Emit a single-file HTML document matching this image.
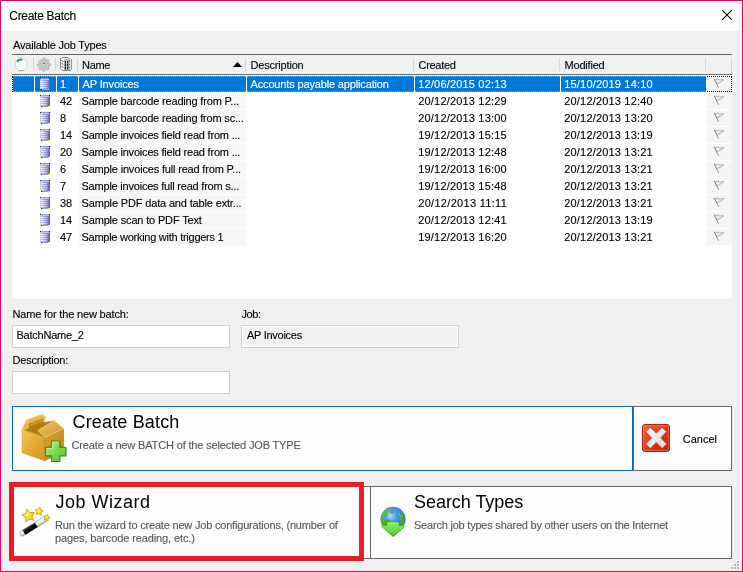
<!DOCTYPE html>
<html><head><meta charset="utf-8"><title>Create Batch</title>
<style>
html,body{margin:0;padding:0;}
body{width:743px;height:572px;overflow:hidden;background:#f0f0f0;font-family:"Liberation Sans",sans-serif;font-size:11px;color:#000;position:relative;}
div,i,b,span,svg{position:absolute;}
#win{left:0;top:0;width:741px;height:570px;border:1px solid #e6005e;background:#f0f0f0;}
#tb{left:1px;top:1px;width:741px;height:30px;background:#fff;}
.t{white-space:nowrap;line-height:20px;font-family:"Liberation Sans",sans-serif;-webkit-text-stroke:0.12px currentColor;}
#lvbg{left:12px;top:54px;width:720px;height:245px;background:#fff;}
#hd{left:12px;top:54px;width:720px;height:21px;background:#f0f0f0;border-top:1px solid #666;border-bottom:1px solid #6c6c6c;box-sizing:border-box;}
.hv{top:58px;width:1px;height:13px;background:#d6d6d6;}
.selbg{left:12px;width:694px;height:16px;background:#0078d7;}
.nmbg{left:79px;width:167px;height:16px;background:#f7f7f7;}
.flbg{height:16px;background:#f5f5f5;}
.vd{width:1px;height:16px;background:#fff;}
#focus{left:12px;top:76px;width:718px;height:14px;border:1px dotted #fff;mix-blend-mode:difference;}
.inp{box-sizing:border-box;width:218px;height:23px;border:1px solid #d0d0d0;background:#fff;}
.inp.ro{background:#f0f0f0;box-shadow:inset 0 0 0 1px #fff, inset 0 0 0 2px #f7f7f7;}
.btn{box-sizing:border-box;background:#fdfdfd;border:1px solid #686868;}
#red{left:9px;top:482px;width:345px;height:69px;border:5px solid #ed1c24;}
</style></head><body>
<div id="win"></div>
<div id="tb"></div>
<svg style="left:722px;top:10px" width="10" height="10" viewBox="0 0 10 10"><path d="M0.3 0.3 L9.7 9.7 M9.7 0.3 L0.3 9.7" stroke="#000" stroke-width="1.05" fill="none"/></svg>
<div id="lvbg"></div>
<div id="hd"></div>
<i class="hv" style="left:33px"></i><i class="hv" style="left:55px"></i><i class="hv" style="left:77px"></i><i class="hv" style="left:245px"></i><i class="hv" style="left:413px"></i><i class="hv" style="left:559px"></i><i class="hv" style="left:705px"></i><i class="hv" style="left:731px"></i>
<svg style="left:233px;top:62px" width="9" height="5" viewBox="0 0 9 5"><path d="M0 5 L4.5 0 L9 5 Z" fill="#000"/></svg>
<div class="selbg" style="top:76px"></div>
<div class="flbg" style="left:707px;top:76px;width:25px"></div>
<i class="vd" style="left:12px;top:76px"></i>
<i class="vd" style="left:34px;top:76px"></i>
<i class="vd" style="left:56px;top:76px"></i>
<i class="vd" style="left:78px;top:76px"></i>
<i class="vd" style="left:246px;top:76px"></i>
<i class="vd" style="left:414px;top:76px"></i>
<i class="vd" style="left:560px;top:76px"></i>
<i class="vd" style="left:706px;top:76px"></i>
<svg class="db" style="left:40px;top:78px" width="10" height="12" viewBox="0 0 10 12" shape-rendering="crispEdges"><linearGradient id="g0" x1="0" x2="1" y1="0" y2="0"><stop offset="0" stop-color="#d2d2f4"/><stop offset=".3" stop-color="#b4b4e4"/><stop offset=".7" stop-color="#8a8ac8"/><stop offset="1" stop-color="#5a5aa2"/></linearGradient><linearGradient id="h0" x1="0" x2="1" y1="0" y2="0"><stop offset="0" stop-color="#fff" stop-opacity=".75"/><stop offset=".6" stop-color="#fff" stop-opacity=".45"/><stop offset="1" stop-color="#fff" stop-opacity="0"/></linearGradient><rect x="0" y="0" width="10" height="12" fill="url(#g0)"/><rect x="2" y="0" width="7" height="1" fill="#9a9ad4"/><rect x="1" y="1" width="8" height="1" fill="#c4c4ee"/><rect x="1" y="3" width="8" height="1" fill="url(#h0)"/><rect x="1" y="5" width="8" height="1" fill="url(#h0)"/><rect x="1" y="7" width="8" height="1" fill="url(#h0)"/><rect x="1" y="9" width="8" height="1" fill="url(#h0)"/><rect x="0" y="0" width="1" height="1" fill="#1c1c5c"/><rect x="1" y="0" width="1" height="1" fill="#e8e020"/><rect x="9" y="0" width="1" height="1" fill="#1c1c5c"/><rect x="0" y="10" width="1" height="1" fill="#e8e020"/><rect x="0" y="11" width="1" height="1" fill="#0078d7"/><rect x="1" y="11" width="1" height="1" fill="#1c1c5c"/><rect x="2" y="11" width="6" height="1" fill="#9c9cd4"/><rect x="8" y="11" width="1" height="1" fill="#e8e020"/><rect x="9" y="11" width="1" height="1" fill="#0078d7"/><rect x="9" y="10" width="1" height="1" fill="#7a7aba"/></svg>
<svg class="fg" style="left:713px;top:78px" width="13" height="11" viewBox="0 0 13 11"><path d="M1.2 0.9 L2.6 1.7 L5 1 L6.6 1.9 L11 1.7 L7 4.4 L3.8 5.8 Z" fill="#eeeee0" stroke="#a2a2a2" stroke-width=".8" stroke-linejoin="round"/><path d="M1.2 0.9 L5.6 9.8" stroke="#8c8c8c" stroke-width="1" fill="none"/></svg>
<div class="nmbg" style="top:93px"></div>
<div class="flbg" style="left:707px;top:93px;width:25px"></div>
<svg class="db" style="left:40px;top:95px" width="10" height="12" viewBox="0 0 10 12" shape-rendering="crispEdges"><linearGradient id="g1" x1="0" x2="1" y1="0" y2="0"><stop offset="0" stop-color="#d2d2f4"/><stop offset=".3" stop-color="#b4b4e4"/><stop offset=".7" stop-color="#8a8ac8"/><stop offset="1" stop-color="#5a5aa2"/></linearGradient><linearGradient id="h1" x1="0" x2="1" y1="0" y2="0"><stop offset="0" stop-color="#fff" stop-opacity=".75"/><stop offset=".6" stop-color="#fff" stop-opacity=".45"/><stop offset="1" stop-color="#fff" stop-opacity="0"/></linearGradient><rect x="0" y="0" width="10" height="12" fill="url(#g1)"/><rect x="2" y="0" width="7" height="1" fill="#9a9ad4"/><rect x="1" y="1" width="8" height="1" fill="#c4c4ee"/><rect x="1" y="3" width="8" height="1" fill="url(#h1)"/><rect x="1" y="5" width="8" height="1" fill="url(#h1)"/><rect x="1" y="7" width="8" height="1" fill="url(#h1)"/><rect x="1" y="9" width="8" height="1" fill="url(#h1)"/><rect x="0" y="0" width="1" height="1" fill="#1c1c5c"/><rect x="1" y="0" width="1" height="1" fill="#e8e020"/><rect x="9" y="0" width="1" height="1" fill="#1c1c5c"/><rect x="0" y="10" width="1" height="1" fill="#e8e020"/><rect x="0" y="11" width="1" height="1" fill="#fff"/><rect x="1" y="11" width="1" height="1" fill="#1c1c5c"/><rect x="2" y="11" width="6" height="1" fill="#9c9cd4"/><rect x="8" y="11" width="1" height="1" fill="#e8e020"/><rect x="9" y="11" width="1" height="1" fill="#fff"/><rect x="9" y="10" width="1" height="1" fill="#7a7aba"/></svg>
<svg class="fg" style="left:713px;top:95px" width="13" height="11" viewBox="0 0 13 11"><path d="M1.2 0.9 L2.6 1.7 L5 1 L6.6 1.9 L11 1.7 L7 4.4 L3.8 5.8 Z" fill="#eeeee0" stroke="#a2a2a2" stroke-width=".8" stroke-linejoin="round"/><path d="M1.2 0.9 L5.6 9.8" stroke="#8c8c8c" stroke-width="1" fill="none"/></svg>
<div class="nmbg" style="top:110px"></div>
<div class="flbg" style="left:707px;top:110px;width:25px"></div>
<svg class="db" style="left:40px;top:112px" width="10" height="12" viewBox="0 0 10 12" shape-rendering="crispEdges"><linearGradient id="g2" x1="0" x2="1" y1="0" y2="0"><stop offset="0" stop-color="#d2d2f4"/><stop offset=".3" stop-color="#b4b4e4"/><stop offset=".7" stop-color="#8a8ac8"/><stop offset="1" stop-color="#5a5aa2"/></linearGradient><linearGradient id="h2" x1="0" x2="1" y1="0" y2="0"><stop offset="0" stop-color="#fff" stop-opacity=".75"/><stop offset=".6" stop-color="#fff" stop-opacity=".45"/><stop offset="1" stop-color="#fff" stop-opacity="0"/></linearGradient><rect x="0" y="0" width="10" height="12" fill="url(#g2)"/><rect x="2" y="0" width="7" height="1" fill="#9a9ad4"/><rect x="1" y="1" width="8" height="1" fill="#c4c4ee"/><rect x="1" y="3" width="8" height="1" fill="url(#h2)"/><rect x="1" y="5" width="8" height="1" fill="url(#h2)"/><rect x="1" y="7" width="8" height="1" fill="url(#h2)"/><rect x="1" y="9" width="8" height="1" fill="url(#h2)"/><rect x="0" y="0" width="1" height="1" fill="#1c1c5c"/><rect x="1" y="0" width="1" height="1" fill="#e8e020"/><rect x="9" y="0" width="1" height="1" fill="#1c1c5c"/><rect x="0" y="10" width="1" height="1" fill="#e8e020"/><rect x="0" y="11" width="1" height="1" fill="#fff"/><rect x="1" y="11" width="1" height="1" fill="#1c1c5c"/><rect x="2" y="11" width="6" height="1" fill="#9c9cd4"/><rect x="8" y="11" width="1" height="1" fill="#e8e020"/><rect x="9" y="11" width="1" height="1" fill="#fff"/><rect x="9" y="10" width="1" height="1" fill="#7a7aba"/></svg>
<svg class="fg" style="left:713px;top:112px" width="13" height="11" viewBox="0 0 13 11"><path d="M1.2 0.9 L2.6 1.7 L5 1 L6.6 1.9 L11 1.7 L7 4.4 L3.8 5.8 Z" fill="#eeeee0" stroke="#a2a2a2" stroke-width=".8" stroke-linejoin="round"/><path d="M1.2 0.9 L5.6 9.8" stroke="#8c8c8c" stroke-width="1" fill="none"/></svg>
<div class="nmbg" style="top:127px"></div>
<div class="flbg" style="left:707px;top:127px;width:25px"></div>
<svg class="db" style="left:40px;top:129px" width="10" height="12" viewBox="0 0 10 12" shape-rendering="crispEdges"><linearGradient id="g3" x1="0" x2="1" y1="0" y2="0"><stop offset="0" stop-color="#d2d2f4"/><stop offset=".3" stop-color="#b4b4e4"/><stop offset=".7" stop-color="#8a8ac8"/><stop offset="1" stop-color="#5a5aa2"/></linearGradient><linearGradient id="h3" x1="0" x2="1" y1="0" y2="0"><stop offset="0" stop-color="#fff" stop-opacity=".75"/><stop offset=".6" stop-color="#fff" stop-opacity=".45"/><stop offset="1" stop-color="#fff" stop-opacity="0"/></linearGradient><rect x="0" y="0" width="10" height="12" fill="url(#g3)"/><rect x="2" y="0" width="7" height="1" fill="#9a9ad4"/><rect x="1" y="1" width="8" height="1" fill="#c4c4ee"/><rect x="1" y="3" width="8" height="1" fill="url(#h3)"/><rect x="1" y="5" width="8" height="1" fill="url(#h3)"/><rect x="1" y="7" width="8" height="1" fill="url(#h3)"/><rect x="1" y="9" width="8" height="1" fill="url(#h3)"/><rect x="0" y="0" width="1" height="1" fill="#1c1c5c"/><rect x="1" y="0" width="1" height="1" fill="#e8e020"/><rect x="9" y="0" width="1" height="1" fill="#1c1c5c"/><rect x="0" y="10" width="1" height="1" fill="#e8e020"/><rect x="0" y="11" width="1" height="1" fill="#fff"/><rect x="1" y="11" width="1" height="1" fill="#1c1c5c"/><rect x="2" y="11" width="6" height="1" fill="#9c9cd4"/><rect x="8" y="11" width="1" height="1" fill="#e8e020"/><rect x="9" y="11" width="1" height="1" fill="#fff"/><rect x="9" y="10" width="1" height="1" fill="#7a7aba"/></svg>
<svg class="fg" style="left:713px;top:129px" width="13" height="11" viewBox="0 0 13 11"><path d="M1.2 0.9 L2.6 1.7 L5 1 L6.6 1.9 L11 1.7 L7 4.4 L3.8 5.8 Z" fill="#eeeee0" stroke="#a2a2a2" stroke-width=".8" stroke-linejoin="round"/><path d="M1.2 0.9 L5.6 9.8" stroke="#8c8c8c" stroke-width="1" fill="none"/></svg>
<div class="nmbg" style="top:144px"></div>
<div class="flbg" style="left:707px;top:144px;width:25px"></div>
<svg class="db" style="left:40px;top:146px" width="10" height="12" viewBox="0 0 10 12" shape-rendering="crispEdges"><linearGradient id="g4" x1="0" x2="1" y1="0" y2="0"><stop offset="0" stop-color="#d2d2f4"/><stop offset=".3" stop-color="#b4b4e4"/><stop offset=".7" stop-color="#8a8ac8"/><stop offset="1" stop-color="#5a5aa2"/></linearGradient><linearGradient id="h4" x1="0" x2="1" y1="0" y2="0"><stop offset="0" stop-color="#fff" stop-opacity=".75"/><stop offset=".6" stop-color="#fff" stop-opacity=".45"/><stop offset="1" stop-color="#fff" stop-opacity="0"/></linearGradient><rect x="0" y="0" width="10" height="12" fill="url(#g4)"/><rect x="2" y="0" width="7" height="1" fill="#9a9ad4"/><rect x="1" y="1" width="8" height="1" fill="#c4c4ee"/><rect x="1" y="3" width="8" height="1" fill="url(#h4)"/><rect x="1" y="5" width="8" height="1" fill="url(#h4)"/><rect x="1" y="7" width="8" height="1" fill="url(#h4)"/><rect x="1" y="9" width="8" height="1" fill="url(#h4)"/><rect x="0" y="0" width="1" height="1" fill="#1c1c5c"/><rect x="1" y="0" width="1" height="1" fill="#e8e020"/><rect x="9" y="0" width="1" height="1" fill="#1c1c5c"/><rect x="0" y="10" width="1" height="1" fill="#e8e020"/><rect x="0" y="11" width="1" height="1" fill="#fff"/><rect x="1" y="11" width="1" height="1" fill="#1c1c5c"/><rect x="2" y="11" width="6" height="1" fill="#9c9cd4"/><rect x="8" y="11" width="1" height="1" fill="#e8e020"/><rect x="9" y="11" width="1" height="1" fill="#fff"/><rect x="9" y="10" width="1" height="1" fill="#7a7aba"/></svg>
<svg class="fg" style="left:713px;top:146px" width="13" height="11" viewBox="0 0 13 11"><path d="M1.2 0.9 L2.6 1.7 L5 1 L6.6 1.9 L11 1.7 L7 4.4 L3.8 5.8 Z" fill="#eeeee0" stroke="#a2a2a2" stroke-width=".8" stroke-linejoin="round"/><path d="M1.2 0.9 L5.6 9.8" stroke="#8c8c8c" stroke-width="1" fill="none"/></svg>
<div class="nmbg" style="top:161px"></div>
<div class="flbg" style="left:707px;top:161px;width:25px"></div>
<svg class="db" style="left:40px;top:163px" width="10" height="12" viewBox="0 0 10 12" shape-rendering="crispEdges"><linearGradient id="g5" x1="0" x2="1" y1="0" y2="0"><stop offset="0" stop-color="#d2d2f4"/><stop offset=".3" stop-color="#b4b4e4"/><stop offset=".7" stop-color="#8a8ac8"/><stop offset="1" stop-color="#5a5aa2"/></linearGradient><linearGradient id="h5" x1="0" x2="1" y1="0" y2="0"><stop offset="0" stop-color="#fff" stop-opacity=".75"/><stop offset=".6" stop-color="#fff" stop-opacity=".45"/><stop offset="1" stop-color="#fff" stop-opacity="0"/></linearGradient><rect x="0" y="0" width="10" height="12" fill="url(#g5)"/><rect x="2" y="0" width="7" height="1" fill="#9a9ad4"/><rect x="1" y="1" width="8" height="1" fill="#c4c4ee"/><rect x="1" y="3" width="8" height="1" fill="url(#h5)"/><rect x="1" y="5" width="8" height="1" fill="url(#h5)"/><rect x="1" y="7" width="8" height="1" fill="url(#h5)"/><rect x="1" y="9" width="8" height="1" fill="url(#h5)"/><rect x="0" y="0" width="1" height="1" fill="#1c1c5c"/><rect x="1" y="0" width="1" height="1" fill="#e8e020"/><rect x="9" y="0" width="1" height="1" fill="#1c1c5c"/><rect x="0" y="10" width="1" height="1" fill="#e8e020"/><rect x="0" y="11" width="1" height="1" fill="#fff"/><rect x="1" y="11" width="1" height="1" fill="#1c1c5c"/><rect x="2" y="11" width="6" height="1" fill="#9c9cd4"/><rect x="8" y="11" width="1" height="1" fill="#e8e020"/><rect x="9" y="11" width="1" height="1" fill="#fff"/><rect x="9" y="10" width="1" height="1" fill="#7a7aba"/></svg>
<svg class="fg" style="left:713px;top:163px" width="13" height="11" viewBox="0 0 13 11"><path d="M1.2 0.9 L2.6 1.7 L5 1 L6.6 1.9 L11 1.7 L7 4.4 L3.8 5.8 Z" fill="#eeeee0" stroke="#a2a2a2" stroke-width=".8" stroke-linejoin="round"/><path d="M1.2 0.9 L5.6 9.8" stroke="#8c8c8c" stroke-width="1" fill="none"/></svg>
<div class="nmbg" style="top:178px"></div>
<div class="flbg" style="left:707px;top:178px;width:25px"></div>
<svg class="db" style="left:40px;top:180px" width="10" height="12" viewBox="0 0 10 12" shape-rendering="crispEdges"><linearGradient id="g6" x1="0" x2="1" y1="0" y2="0"><stop offset="0" stop-color="#d2d2f4"/><stop offset=".3" stop-color="#b4b4e4"/><stop offset=".7" stop-color="#8a8ac8"/><stop offset="1" stop-color="#5a5aa2"/></linearGradient><linearGradient id="h6" x1="0" x2="1" y1="0" y2="0"><stop offset="0" stop-color="#fff" stop-opacity=".75"/><stop offset=".6" stop-color="#fff" stop-opacity=".45"/><stop offset="1" stop-color="#fff" stop-opacity="0"/></linearGradient><rect x="0" y="0" width="10" height="12" fill="url(#g6)"/><rect x="2" y="0" width="7" height="1" fill="#9a9ad4"/><rect x="1" y="1" width="8" height="1" fill="#c4c4ee"/><rect x="1" y="3" width="8" height="1" fill="url(#h6)"/><rect x="1" y="5" width="8" height="1" fill="url(#h6)"/><rect x="1" y="7" width="8" height="1" fill="url(#h6)"/><rect x="1" y="9" width="8" height="1" fill="url(#h6)"/><rect x="0" y="0" width="1" height="1" fill="#1c1c5c"/><rect x="1" y="0" width="1" height="1" fill="#e8e020"/><rect x="9" y="0" width="1" height="1" fill="#1c1c5c"/><rect x="0" y="10" width="1" height="1" fill="#e8e020"/><rect x="0" y="11" width="1" height="1" fill="#fff"/><rect x="1" y="11" width="1" height="1" fill="#1c1c5c"/><rect x="2" y="11" width="6" height="1" fill="#9c9cd4"/><rect x="8" y="11" width="1" height="1" fill="#e8e020"/><rect x="9" y="11" width="1" height="1" fill="#fff"/><rect x="9" y="10" width="1" height="1" fill="#7a7aba"/></svg>
<svg class="fg" style="left:713px;top:180px" width="13" height="11" viewBox="0 0 13 11"><path d="M1.2 0.9 L2.6 1.7 L5 1 L6.6 1.9 L11 1.7 L7 4.4 L3.8 5.8 Z" fill="#eeeee0" stroke="#a2a2a2" stroke-width=".8" stroke-linejoin="round"/><path d="M1.2 0.9 L5.6 9.8" stroke="#8c8c8c" stroke-width="1" fill="none"/></svg>
<div class="nmbg" style="top:195px"></div>
<div class="flbg" style="left:707px;top:195px;width:25px"></div>
<svg class="db" style="left:40px;top:197px" width="10" height="12" viewBox="0 0 10 12" shape-rendering="crispEdges"><linearGradient id="g7" x1="0" x2="1" y1="0" y2="0"><stop offset="0" stop-color="#d2d2f4"/><stop offset=".3" stop-color="#b4b4e4"/><stop offset=".7" stop-color="#8a8ac8"/><stop offset="1" stop-color="#5a5aa2"/></linearGradient><linearGradient id="h7" x1="0" x2="1" y1="0" y2="0"><stop offset="0" stop-color="#fff" stop-opacity=".75"/><stop offset=".6" stop-color="#fff" stop-opacity=".45"/><stop offset="1" stop-color="#fff" stop-opacity="0"/></linearGradient><rect x="0" y="0" width="10" height="12" fill="url(#g7)"/><rect x="2" y="0" width="7" height="1" fill="#9a9ad4"/><rect x="1" y="1" width="8" height="1" fill="#c4c4ee"/><rect x="1" y="3" width="8" height="1" fill="url(#h7)"/><rect x="1" y="5" width="8" height="1" fill="url(#h7)"/><rect x="1" y="7" width="8" height="1" fill="url(#h7)"/><rect x="1" y="9" width="8" height="1" fill="url(#h7)"/><rect x="0" y="0" width="1" height="1" fill="#1c1c5c"/><rect x="1" y="0" width="1" height="1" fill="#e8e020"/><rect x="9" y="0" width="1" height="1" fill="#1c1c5c"/><rect x="0" y="10" width="1" height="1" fill="#e8e020"/><rect x="0" y="11" width="1" height="1" fill="#fff"/><rect x="1" y="11" width="1" height="1" fill="#1c1c5c"/><rect x="2" y="11" width="6" height="1" fill="#9c9cd4"/><rect x="8" y="11" width="1" height="1" fill="#e8e020"/><rect x="9" y="11" width="1" height="1" fill="#fff"/><rect x="9" y="10" width="1" height="1" fill="#7a7aba"/></svg>
<svg class="fg" style="left:713px;top:197px" width="13" height="11" viewBox="0 0 13 11"><path d="M1.2 0.9 L2.6 1.7 L5 1 L6.6 1.9 L11 1.7 L7 4.4 L3.8 5.8 Z" fill="#eeeee0" stroke="#a2a2a2" stroke-width=".8" stroke-linejoin="round"/><path d="M1.2 0.9 L5.6 9.8" stroke="#8c8c8c" stroke-width="1" fill="none"/></svg>
<div class="nmbg" style="top:212px"></div>
<div class="flbg" style="left:707px;top:212px;width:25px"></div>
<svg class="db" style="left:40px;top:214px" width="10" height="12" viewBox="0 0 10 12" shape-rendering="crispEdges"><linearGradient id="g8" x1="0" x2="1" y1="0" y2="0"><stop offset="0" stop-color="#d2d2f4"/><stop offset=".3" stop-color="#b4b4e4"/><stop offset=".7" stop-color="#8a8ac8"/><stop offset="1" stop-color="#5a5aa2"/></linearGradient><linearGradient id="h8" x1="0" x2="1" y1="0" y2="0"><stop offset="0" stop-color="#fff" stop-opacity=".75"/><stop offset=".6" stop-color="#fff" stop-opacity=".45"/><stop offset="1" stop-color="#fff" stop-opacity="0"/></linearGradient><rect x="0" y="0" width="10" height="12" fill="url(#g8)"/><rect x="2" y="0" width="7" height="1" fill="#9a9ad4"/><rect x="1" y="1" width="8" height="1" fill="#c4c4ee"/><rect x="1" y="3" width="8" height="1" fill="url(#h8)"/><rect x="1" y="5" width="8" height="1" fill="url(#h8)"/><rect x="1" y="7" width="8" height="1" fill="url(#h8)"/><rect x="1" y="9" width="8" height="1" fill="url(#h8)"/><rect x="0" y="0" width="1" height="1" fill="#1c1c5c"/><rect x="1" y="0" width="1" height="1" fill="#e8e020"/><rect x="9" y="0" width="1" height="1" fill="#1c1c5c"/><rect x="0" y="10" width="1" height="1" fill="#e8e020"/><rect x="0" y="11" width="1" height="1" fill="#fff"/><rect x="1" y="11" width="1" height="1" fill="#1c1c5c"/><rect x="2" y="11" width="6" height="1" fill="#9c9cd4"/><rect x="8" y="11" width="1" height="1" fill="#e8e020"/><rect x="9" y="11" width="1" height="1" fill="#fff"/><rect x="9" y="10" width="1" height="1" fill="#7a7aba"/></svg>
<svg class="fg" style="left:713px;top:214px" width="13" height="11" viewBox="0 0 13 11"><path d="M1.2 0.9 L2.6 1.7 L5 1 L6.6 1.9 L11 1.7 L7 4.4 L3.8 5.8 Z" fill="#eeeee0" stroke="#a2a2a2" stroke-width=".8" stroke-linejoin="round"/><path d="M1.2 0.9 L5.6 9.8" stroke="#8c8c8c" stroke-width="1" fill="none"/></svg>
<div class="nmbg" style="top:229px"></div>
<div class="flbg" style="left:707px;top:229px;width:25px"></div>
<svg class="db" style="left:40px;top:231px" width="10" height="12" viewBox="0 0 10 12" shape-rendering="crispEdges"><linearGradient id="g9" x1="0" x2="1" y1="0" y2="0"><stop offset="0" stop-color="#d2d2f4"/><stop offset=".3" stop-color="#b4b4e4"/><stop offset=".7" stop-color="#8a8ac8"/><stop offset="1" stop-color="#5a5aa2"/></linearGradient><linearGradient id="h9" x1="0" x2="1" y1="0" y2="0"><stop offset="0" stop-color="#fff" stop-opacity=".75"/><stop offset=".6" stop-color="#fff" stop-opacity=".45"/><stop offset="1" stop-color="#fff" stop-opacity="0"/></linearGradient><rect x="0" y="0" width="10" height="12" fill="url(#g9)"/><rect x="2" y="0" width="7" height="1" fill="#9a9ad4"/><rect x="1" y="1" width="8" height="1" fill="#c4c4ee"/><rect x="1" y="3" width="8" height="1" fill="url(#h9)"/><rect x="1" y="5" width="8" height="1" fill="url(#h9)"/><rect x="1" y="7" width="8" height="1" fill="url(#h9)"/><rect x="1" y="9" width="8" height="1" fill="url(#h9)"/><rect x="0" y="0" width="1" height="1" fill="#1c1c5c"/><rect x="1" y="0" width="1" height="1" fill="#e8e020"/><rect x="9" y="0" width="1" height="1" fill="#1c1c5c"/><rect x="0" y="10" width="1" height="1" fill="#e8e020"/><rect x="0" y="11" width="1" height="1" fill="#fff"/><rect x="1" y="11" width="1" height="1" fill="#1c1c5c"/><rect x="2" y="11" width="6" height="1" fill="#9c9cd4"/><rect x="8" y="11" width="1" height="1" fill="#e8e020"/><rect x="9" y="11" width="1" height="1" fill="#fff"/><rect x="9" y="10" width="1" height="1" fill="#7a7aba"/></svg>
<svg class="fg" style="left:713px;top:231px" width="13" height="11" viewBox="0 0 13 11"><path d="M1.2 0.9 L2.6 1.7 L5 1 L6.6 1.9 L11 1.7 L7 4.4 L3.8 5.8 Z" fill="#eeeee0" stroke="#a2a2a2" stroke-width=".8" stroke-linejoin="round"/><path d="M1.2 0.9 L5.6 9.8" stroke="#8c8c8c" stroke-width="1" fill="none"/></svg>
<div class="inp" style="left:12px;top:325px"></div>
<div class="inp ro" style="left:241px;top:325px"></div>
<div class="inp" style="left:12px;top:371px"></div>
<div class="btn" style="left:12px;top:406px;width:621px;height:65px;border-color:#0d66c8;"></div>
<div class="btn" style="left:633px;top:406px;width:99px;height:65px;"></div>
<div class="btn" style="left:12px;top:486px;width:359px;height:73px;"></div>
<div class="btn" style="left:370px;top:486px;width:362px;height:73px;"></div>

<!-- header icons -->
<svg style="left:14px;top:56px" width="14" height="16" viewBox="0 0 14 16">
<rect x="5.5" y="1.2" width="3" height="1.4" fill="#cfcfcf"/>
<path d="M4.2 2.8 H9.8 L12.8 5.6 V11.4 L9.8 14.6 H4.2 L1.3 11.6 V5.6 Z" fill="#fff" stroke="#cdcdcd" stroke-width="0.9"/>
<path d="M4.6 14.6 H9.4" stroke="#8f8f8f" stroke-width="0.9"/>
<path d="M3.4 5.3 Q4.6 3.6 7.8 3.5" stroke="#00868a" stroke-width="1.5" fill="none" stroke-linecap="round"/>
<rect x="4.6" y="6.3" width="1.6" height="0.9" fill="#dadada"/>
</svg>
<svg style="left:36px;top:56px" width="16" height="16" viewBox="0 0 16 16">
<path d="M6.6 1.2 h2.8 l.5 2 l1.2 .6 l1.8 -1 l1.7 1.9 l-1.1 1.7 l.4 1.2 l2 .5 v2.3 l-2 .5 l-.5 1.2 l1 1.8 l-1.8 1.7 l-1.7 -1 l-1.2 .5 l-.5 1.9 h-2.6 l-.5 -1.9 l-1.2 -.5 l-1.8 1 l-1.7 -1.8 l1 -1.7 l-.5 -1.2 l-1.9 -.5 v-2.4 l1.9 -.5 l.5 -1.2 l-1 -1.7 l1.8 -1.8 l1.7 1 l1.2 -.6 z" fill="#c2c2c2" stroke="#a9a9a9" stroke-width=".7" transform="translate(1.2,.9) scale(.84)"/>
<path d="M3 4.5 L4.6 3 M5.8 2.4 L6.6 1.6 M1.6 7.6 L2.4 6.6" stroke="#fff" stroke-width="1" opacity=".9"/>
<circle cx="7.8" cy="7.4" r="1.6" fill="#d6d6d6"/>
<rect x="7" y="6.9" width="2.1" height="1.1" fill="#0a8a8c"/>
</svg>
<svg style="left:59px;top:56px" width="14" height="16" viewBox="0 0 14 16" shape-rendering="crispEdges">
<rect x="2" y="2" width="10" height="12" fill="#f4f4f4"/>
<rect x="3" y="1" width="6" height="1" fill="#8c8c8c"/><rect x="2" y="2" width="1" height="1" fill="#9a9a9a"/><rect x="9" y="2" width="2" height="1" fill="#b0b0b0"/>
<rect x="1" y="2" width="1" height="11" fill="#8a8a8a"/><rect x="12" y="3" width="1" height="11" fill="#9a9a9a"/>
<rect x="3" y="14" width="9" height="1" fill="#8c8c8c"/><rect x="2" y="13" width="1" height="1" fill="#9a9a9a"/>
<rect x="2" y="4" width="2" height="1" fill="#a4a4a4"/><rect x="3" y="5" width="2" height="1" fill="#b4b4b4"/>
<rect x="2" y="7" width="2" height="1" fill="#a4a4a4"/><rect x="3" y="8" width="2" height="1" fill="#b4b4b4"/>
<rect x="2" y="10" width="2" height="1" fill="#a4a4a4"/><rect x="3" y="11" width="2" height="1" fill="#b4b4b4"/>
<rect x="5" y="3" width="7" height="11" fill="#c6c6c6"/>
<rect x="5" y="3" width="1" height="11" fill="#a6a6a6"/><rect x="7" y="4" width="1" height="10" fill="#dcdcdc"/><rect x="9" y="4" width="1" height="10" fill="#b2a8a8"/><rect x="11" y="3" width="1" height="11" fill="#e6e6e6"/>
<g fill="#0a0a92"><rect x="6" y="5" width="1" height="2"/><rect x="8" y="5" width="1" height="2"/><rect x="6" y="8" width="1" height="2"/><rect x="8" y="8" width="1" height="2"/><rect x="6" y="11" width="1" height="2"/><rect x="8" y="11" width="1" height="2"/></g>
<g fill="#0d8f8f"><rect x="6" y="7" width="1" height="1"/><rect x="8" y="7" width="1" height="1"/><rect x="6" y="10" width="1" height="1"/><rect x="8" y="10" width="1" height="1"/><rect x="6" y="13" width="1" height="1"/><rect x="8" y="13" width="1" height="1"/><rect x="10" y="4" width="1" height="2"/><rect x="10" y="8" width="1" height="1"/><rect x="10" y="11" width="1" height="1"/></g>
</svg>
<!-- box icon -->
<svg style="left:18px;top:408px" width="52" height="56" viewBox="0 0 520 560">
<defs>
<linearGradient id="bxl" x1="0" y1="0" x2="1" y2="1"><stop offset="0" stop-color="#f5c85a"/><stop offset=".5" stop-color="#e4aa34"/><stop offset="1" stop-color="#d09424"/></linearGradient>
<linearGradient id="bxr" x1="0" y1="0" x2="1" y2="1"><stop offset="0" stop-color="#d9a22e"/><stop offset="1" stop-color="#b9821a"/></linearGradient>
<linearGradient id="bxf" x1="0" y1="0" x2="1" y2="1"><stop offset="0" stop-color="#eec058"/><stop offset="1" stop-color="#cf9a2c"/></linearGradient>
<linearGradient id="pl" x1="0" y1="0" x2="1" y2="1"><stop offset="0" stop-color="#b5f08a"/><stop offset=".5" stop-color="#7ddb4e"/><stop offset="1" stop-color="#4fbe2c"/></linearGradient>
</defs>
<path d="M42 215 L85 120 L240 65 L275 88 L258 140 L360 127 L455 206 L265 297 Z" fill="#b5821a"/>
<path d="M85 120 L240 65 L275 88 L258 140 L105 195 Z" fill="#e9b84a" stroke="#f4d27a" stroke-width="10" stroke-linejoin="round"/>
<path d="M108 155 L252 103 L256 165 L205 232 L75 212 Z" fill="#b07f14"/>
<path d="M108 155 L252 103 L254 135 L100 190 Z" fill="#c8921e"/>
<path d="M42 215 L265 297 L265 527 L42 447 Z" fill="url(#bxl)" stroke="#d9a535" stroke-width="8" stroke-linejoin="round"/>
<path d="M265 297 L455 210 L455 440 L265 527 Z" fill="url(#bxr)" stroke="#c08a20" stroke-width="8" stroke-linejoin="round"/>
<path d="M200 226 L360 127 L455 206 L270 292 Z" fill="url(#bxf)" stroke="#f2cf78" stroke-width="9" stroke-linejoin="round"/>
<path d="M42 215 L85 120 L105 195 L75 212 Z" fill="#e8b646" stroke="#f2cf78" stroke-width="8" stroke-linejoin="round"/>
<path d="M335 330 H418 V393 H478 V478 H418 V535 H335 V478 H275 V393 H335 Z" fill="#000" opacity=".18" transform="translate(8,8)"/>
<path d="M335 330 H418 V393 H478 V478 H418 V535 H335 V478 H275 V393 H335 Z" fill="url(#pl)" stroke="#2f9a1c" stroke-width="12" stroke-linejoin="round"/>
<path d="M346 342 H407 M346 342 V404 H288" fill="none" stroke="#d8f8c0" stroke-width="8" opacity=".8"/>
</svg>
<!-- cancel icon -->
<svg style="left:642px;top:424px" width="28" height="28" viewBox="0 0 28 28">
<defs><linearGradient id="cr" x1="0" y1="0" x2="1" y2="1"><stop offset="0" stop-color="#f4693a"/><stop offset=".5" stop-color="#e23a1a"/><stop offset="1" stop-color="#bb1d0c"/></linearGradient>
<linearGradient id="cx" x1="0" y1="0" x2="1" y2="1"><stop offset="0" stop-color="#fff"/><stop offset="1" stop-color="#d6d6d6"/></linearGradient></defs>
<rect x=".5" y=".5" width="27" height="27" rx="2.5" fill="url(#cr)" stroke="#b51c0a" stroke-width="1"/>
<rect x="1.5" y="1.5" width="25" height="25" rx="2" fill="none" stroke="#ff8a5a" stroke-width="1" opacity=".55"/>
<path d="M8.4 3.2 L14.2 9 L20 3.2 L24.6 7.8 L18.8 13.9 L24.8 19.9 L20.2 24.6 L14.2 18.6 L8.3 24.6 L3.6 19.9 L9.6 13.9 L3.8 7.8 Z" fill="url(#cx)" stroke="#c9300f" stroke-width=".8"/>
</svg>
<!-- wand icon -->
<svg style="left:14px;top:498px" width="44" height="48" viewBox="0 0 524 572">
<defs><linearGradient id="wd" x1="0" y1="0" x2="0" y2="1"><stop offset="0" stop-color="#777"/><stop offset=".3" stop-color="#111"/><stop offset="1" stop-color="#000"/></linearGradient>
<linearGradient id="ww" x1="0" y1="0" x2="0" y2="1"><stop offset="0" stop-color="#fff"/><stop offset=".6" stop-color="#e6e6e6"/><stop offset="1" stop-color="#a8a8a8"/></linearGradient>
<radialGradient id="st" cx=".4" cy=".4" r=".7"><stop offset="0" stop-color="#fff27a"/><stop offset=".6" stop-color="#f7d81c"/><stop offset="1" stop-color="#e0b000"/></radialGradient></defs>
<g transform="translate(230,340) rotate(-32)">
<rect x="-185" y="-31" width="375" height="62" rx="28" fill="url(#ww)" stroke="#8f8f8f" stroke-width="7"/>
<rect x="-132" y="-33" width="172" height="66" fill="url(#wd)"/>
</g>
<path d="M0 -80 L25 -34 L76 -25 L40 13 L47 65 L0 42 L-47 65 L-40 13 L-76 -25 L-25 -34 Z" transform="translate(172,212) rotate(-12)" fill="url(#st)" stroke="#c89a00" stroke-width="9" stroke-linejoin="round"/>
<path d="M0 -80 L25 -34 L76 -25 L40 13 L47 65 L0 42 L-47 65 L-40 13 L-76 -25 L-25 -34 Z" transform="translate(300,160) rotate(8) scale(.66)" fill="url(#st)" stroke="#c89a00" stroke-width="12" stroke-linejoin="round"/>
<path d="M0 -80 L25 -34 L76 -25 L40 13 L47 65 L0 42 L-47 65 L-40 13 L-76 -25 L-25 -34 Z" transform="translate(390,235) rotate(15) scale(.52)" fill="url(#st)" stroke="#c89a00" stroke-width="14" stroke-linejoin="round"/>
</svg>
<!-- globe icon -->
<svg style="left:374px;top:500px" width="40" height="44" viewBox="0 0 520 572">
<defs><radialGradient id="gl" cx=".4" cy=".36" r=".7"><stop offset="0" stop-color="#b4dcff"/><stop offset=".35" stop-color="#4a9af0"/><stop offset="1" stop-color="#1a5fd0"/></radialGradient>
<linearGradient id="ga" x1="0" y1="0" x2="0" y2="1"><stop offset="0" stop-color="#8cf060"/><stop offset="1" stop-color="#56d030"/></linearGradient>
<linearGradient id="gg" x1="0" y1="0" x2="1" y2="1"><stop offset="0" stop-color="#6cd040"/><stop offset="1" stop-color="#2f9a18"/></linearGradient>
<clipPath id="gc"><circle cx="247" cy="250" r="160"/></clipPath></defs>
<circle cx="247" cy="250" r="162" fill="url(#gl)"/>
<g clip-path="url(#gc)" fill="url(#gg)">
<path d="M80 200 Q110 150 170 120 L190 140 L160 175 L180 200 L155 222 L138 200 L118 228 L135 260 L185 250 L215 285 L200 330 L150 345 L100 320 L80 270 Z"/>
<path d="M200 130 L240 120 L250 150 L235 185 L215 160 Z"/>
<path d="M312 178 L332 165 L346 200 L372 186 L384 214 L366 232 L392 250 L398 300 L384 340 L350 330 L336 296 L356 268 L330 236 L338 208 Z"/><path d="M356 150 L372 158 L380 178 L366 172 Z"/>
</g>
<path d="M170 292 H322 V338 H412 L250 482 L88 338 H170 Z" fill="#3aa81e"/>
<path d="M170 288 H322 V334 H410 L250 462 L90 334 H170 Z" fill="url(#ga)"/>
</svg>
<span class="t" id="tt" style="left:9.25px;top:6px;font-size:12px;color:#000;letter-spacing:-0.286px;">Create Batch</span>
<span class="t" id="l1" style="left:13.00px;top:35px;font-size:11px;color:#000;letter-spacing:-0.200px;">Available Job Types</span>
<span class="t" id="h1" style="left:82.00px;top:55px;font-size:11px;color:#000;letter-spacing:-0.300px;">Name</span>
<span class="t" id="h2" style="left:250.50px;top:55px;font-size:11px;color:#000;letter-spacing:-0.180px;">Description</span>
<span class="t" id="h3" style="left:418.50px;top:55px;font-size:11px;color:#000;letter-spacing:-0.300px;">Created</span>
<span class="t" id="h4" style="left:564.50px;top:55px;font-size:11px;color:#000;letter-spacing:-0.194px;">Modified</span>
<span class="t" id="n0" style="left:60.00px;top:74px;font-size:11px;color:#fff;">1</span>
<span class="t" id="m0" style="left:82.50px;top:74px;font-size:11px;color:#fff;letter-spacing:-0.135px;">AP Invoices</span>
<span class="t" id="d0" style="left:250.50px;top:74px;font-size:11px;color:#fff;letter-spacing:-0.150px;">Accounts payable application</span>
<span class="t" id="c0" style="left:418.25px;top:74px;font-size:11px;color:#fff;letter-spacing:0.180px;">12/06/2015 02:13</span>
<span class="t" id="o0" style="left:564.25px;top:74px;font-size:11px;color:#fff;letter-spacing:0.180px;">15/10/2019 14:10</span>
<span class="t" id="n1" style="left:60.00px;top:91px;font-size:11px;color:#000;">42</span>
<span class="t" id="m1" style="left:81.50px;top:91px;font-size:11px;color:#000;letter-spacing:-0.176px;">Sample barcode reading from P...</span>
<span class="t" id="c1" style="left:418.25px;top:91px;font-size:11px;color:#000;letter-spacing:0.180px;">20/12/2013 12:29</span>
<span class="t" id="o1" style="left:564.25px;top:91px;font-size:11px;color:#000;letter-spacing:0.180px;">20/12/2013 12:40</span>
<span class="t" id="n2" style="left:60.00px;top:108px;font-size:11px;color:#000;">8</span>
<span class="t" id="m2" style="left:81.50px;top:108px;font-size:11px;color:#000;letter-spacing:-0.183px;">Sample barcode reading from sc...</span>
<span class="t" id="c2" style="left:418.25px;top:108px;font-size:11px;color:#000;letter-spacing:0.180px;">20/12/2013 13:00</span>
<span class="t" id="o2" style="left:564.25px;top:108px;font-size:11px;color:#000;letter-spacing:0.180px;">20/12/2013 13:20</span>
<span class="t" id="n3" style="left:60.00px;top:125px;font-size:11px;color:#000;">14</span>
<span class="t" id="m3" style="left:81.50px;top:125px;font-size:11px;color:#000;letter-spacing:-0.199px;">Sample invoices field read from ...</span>
<span class="t" id="c3" style="left:418.25px;top:125px;font-size:11px;color:#000;letter-spacing:0.180px;">19/12/2013 15:15</span>
<span class="t" id="o3" style="left:564.25px;top:125px;font-size:11px;color:#000;letter-spacing:0.180px;">20/12/2013 13:19</span>
<span class="t" id="n4" style="left:60.00px;top:142px;font-size:11px;color:#000;">20</span>
<span class="t" id="m4" style="left:81.50px;top:142px;font-size:11px;color:#000;letter-spacing:-0.199px;">Sample invoices field read from ...</span>
<span class="t" id="c4" style="left:418.25px;top:142px;font-size:11px;color:#000;letter-spacing:0.180px;">19/12/2013 12:48</span>
<span class="t" id="o4" style="left:564.25px;top:142px;font-size:11px;color:#000;letter-spacing:0.180px;">20/12/2013 13:21</span>
<span class="t" id="n5" style="left:60.00px;top:159px;font-size:11px;color:#000;">6</span>
<span class="t" id="m5" style="left:81.50px;top:159px;font-size:11px;color:#000;letter-spacing:-0.172px;">Sample invoices full read from P...</span>
<span class="t" id="c5" style="left:418.25px;top:159px;font-size:11px;color:#000;letter-spacing:0.180px;">19/12/2013 16:00</span>
<span class="t" id="o5" style="left:564.25px;top:159px;font-size:11px;color:#000;letter-spacing:0.180px;">20/12/2013 13:21</span>
<span class="t" id="n6" style="left:60.00px;top:176px;font-size:11px;color:#000;">7</span>
<span class="t" id="m6" style="left:81.50px;top:176px;font-size:11px;color:#000;letter-spacing:-0.213px;">Sample invoices full read from s...</span>
<span class="t" id="c6" style="left:418.25px;top:176px;font-size:11px;color:#000;letter-spacing:0.180px;">19/12/2013 15:48</span>
<span class="t" id="o6" style="left:564.25px;top:176px;font-size:11px;color:#000;letter-spacing:0.180px;">20/12/2013 13:21</span>
<span class="t" id="n7" style="left:60.00px;top:193px;font-size:11px;color:#000;">38</span>
<span class="t" id="m7" style="left:81.50px;top:193px;font-size:11px;color:#000;letter-spacing:-0.155px;">Sample PDF data and table extr...</span>
<span class="t" id="c7" style="left:418.25px;top:193px;font-size:11px;color:#000;letter-spacing:0.300px;">20/12/2013 11:11</span>
<span class="t" id="o7" style="left:564.25px;top:193px;font-size:11px;color:#000;letter-spacing:0.180px;">20/12/2013 13:21</span>
<span class="t" id="n8" style="left:60.00px;top:210px;font-size:11px;color:#000;">14</span>
<span class="t" id="m8" style="left:81.50px;top:210px;font-size:11px;color:#000;letter-spacing:-0.163px;">Sample scan to PDF Text</span>
<span class="t" id="c8" style="left:418.25px;top:210px;font-size:11px;color:#000;letter-spacing:0.180px;">20/12/2013 12:41</span>
<span class="t" id="o8" style="left:564.25px;top:210px;font-size:11px;color:#000;letter-spacing:0.180px;">20/12/2013 13:19</span>
<span class="t" id="n9" style="left:60.00px;top:227px;font-size:11px;color:#000;">47</span>
<span class="t" id="m9" style="left:81.50px;top:227px;font-size:11px;color:#000;letter-spacing:-0.264px;">Sample working with triggers 1</span>
<span class="t" id="c9" style="left:418.25px;top:227px;font-size:11px;color:#000;letter-spacing:0.180px;">19/12/2013 16:20</span>
<span class="t" id="o9" style="left:564.25px;top:227px;font-size:11px;color:#000;letter-spacing:0.180px;">20/12/2013 13:21</span>
<span class="t" id="l2" style="left:12.50px;top:304px;font-size:11px;color:#000;letter-spacing:-0.162px;">Name for the new batch:</span>
<span class="t" id="l3" style="left:241.50px;top:304px;font-size:11px;color:#000;letter-spacing:-0.450px;">Job:</span>
<span class="t" id="l4" style="left:12.50px;top:350px;font-size:11px;color:#000;letter-spacing:-0.205px;">Description:</span>
<span class="t" id="i1" style="left:16.50px;top:325px;font-size:11px;color:#000;letter-spacing:-0.225px;">BatchName_2</span>
<span class="t" id="i2" style="left:247.00px;top:325px;font-size:11px;color:#000;letter-spacing:-0.270px;">AP Invoices</span>
<span class="t" id="b1" style="left:72.50px;top:412px;font-size:18px;color:#000;letter-spacing:0.163px;-webkit-text-stroke:0;">Create Batch</span>
<span class="t" id="s1" style="left:71.50px;top:435px;font-size:11px;color:#56565e;letter-spacing:-0.149px;">Create a new BATCH of the selected JOB TYPE</span>
<span class="t" id="b2" style="left:682.75px;top:429px;font-size:11px;color:#000;">Cancel</span>
<span class="t" id="b3" style="left:55.50px;top:492px;font-size:18px;color:#000;letter-spacing:0.500px;-webkit-text-stroke:0;">Job Wizard</span>
<span class="t" id="s3" style="left:55.00px;top:515px;font-size:11px;color:#56565e;letter-spacing:-0.193px;">Run the wizard to create new Job configurations, (number of</span>
<span class="t" id="s4" style="left:55.00px;top:528px;font-size:11px;color:#56565e;letter-spacing:-0.114px;">pages, barcode reading, etc.)</span>
<span class="t" id="b4" style="left:414.00px;top:492px;font-size:18px;color:#000;letter-spacing:-0.043px;-webkit-text-stroke:0;">Search Types</span>
<span class="t" id="s5" style="left:414.00px;top:515px;font-size:11px;color:#56565e;letter-spacing:-0.213px;">Search job types shared by other users on the Internet</span>
<div id="focus"></div>
<div id="red"></div>
<svg style="left:731px;top:561px" width="8" height="8" viewBox="0 0 8 8" shape-rendering="crispEdges"><g fill="#b8b8b8"><rect x="6" y="0" width="2" height="2"/><rect x="3" y="3" width="2" height="2"/><rect x="6" y="3" width="2" height="2"/><rect x="0" y="6" width="2" height="2"/><rect x="3" y="6" width="2" height="2"/><rect x="6" y="6" width="2" height="2"/></g></svg>
</body></html>
